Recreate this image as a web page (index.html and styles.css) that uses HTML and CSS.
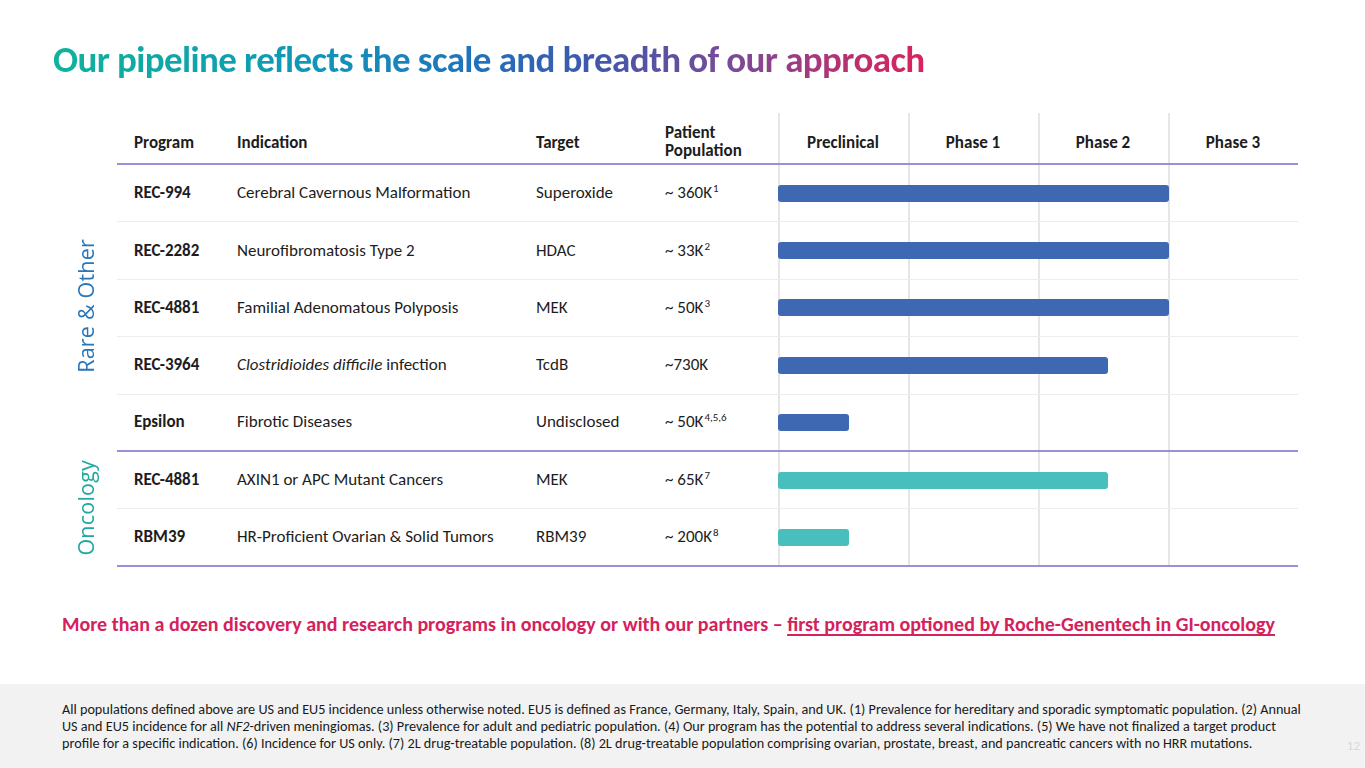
FILE: index.html
```html
<!DOCTYPE html>
<html lang="en">
<head>
<meta charset="utf-8">
<title>Pipeline</title>
<link rel="stylesheet" href="styles.css">
</head>
<body>
<div class="slide">
  <header class="top">
    <h1 class="title">Our pipeline reflects the scale and breadth of our approach</h1>
  </header>

  <section class="pipeline">
    <div class="side">
      <div class="side-head"></div>
      <div class="side-group rare"><span>Rare &amp; Other</span></div>
      <div class="side-group onco"><span>Oncology</span></div>
    </div>
    <div class="table">
      <div class="row head">
        <div class="cell"><span>Program</span></div>
        <div class="cell"><span>Indication</span></div>
        <div class="cell"><span>Target</span></div>
        <div class="cell two"><span>Patient<br>Population</span></div>
        <div class="track">
          <div class="ph">Preclinical</div>
          <div class="ph">Phase 1</div>
          <div class="ph">Phase 2</div>
          <div class="ph">Phase 3</div>
        </div>
      </div>

      <div class="row">
        <div class="cell prog"><span>REC-994</span></div>
        <div class="cell"><span>Cerebral Cavernous Malformation</span></div>
        <div class="cell"><span>Superoxide</span></div>
        <div class="cell"><span>~ 360K<sup>1</sup></span></div>
        <div class="track"><div class="bar blue" style="width:391px"></div></div>
      </div>
      <div class="row">
        <div class="cell prog"><span>REC-2282</span></div>
        <div class="cell"><span>Neurofibromatosis Type 2</span></div>
        <div class="cell"><span>HDAC</span></div>
        <div class="cell"><span>~ 33K<sup>2</sup></span></div>
        <div class="track"><div class="bar blue" style="width:391px"></div></div>
      </div>
      <div class="row">
        <div class="cell prog"><span>REC-4881</span></div>
        <div class="cell"><span>Familial Adenomatous Polyposis</span></div>
        <div class="cell"><span>MEK</span></div>
        <div class="cell"><span>~ 50K<sup>3</sup></span></div>
        <div class="track"><div class="bar blue" style="width:391px"></div></div>
      </div>
      <div class="row">
        <div class="cell prog"><span>REC-3964</span></div>
        <div class="cell"><span><em>Clostridioides difficile</em> infection</span></div>
        <div class="cell"><span>TcdB</span></div>
        <div class="cell"><span>~730K</span></div>
        <div class="track"><div class="bar blue" style="width:330px"></div></div>
      </div>
      <div class="row group-end">
        <div class="cell prog"><span>Epsilon</span></div>
        <div class="cell"><span>Fibrotic Diseases</span></div>
        <div class="cell"><span>Undisclosed</span></div>
        <div class="cell"><span>~ 50K<sup>4,5,6</sup></span></div>
        <div class="track"><div class="bar blue" style="width:71px"></div></div>
      </div>
      <div class="row">
        <div class="cell prog"><span>REC-4881</span></div>
        <div class="cell"><span>AXIN1 or APC Mutant Cancers</span></div>
        <div class="cell"><span>MEK</span></div>
        <div class="cell"><span>~ 65K<sup>7</sup></span></div>
        <div class="track"><div class="bar teal" style="width:330px"></div></div>
      </div>
      <div class="row group-end">
        <div class="cell prog"><span>RBM39</span></div>
        <div class="cell"><span>HR-Proficient Ovarian &amp; Solid Tumors</span></div>
        <div class="cell"><span>RBM39</span></div>
        <div class="cell"><span>~ 200K<sup>8</sup></span></div>
        <div class="track"><div class="bar teal" style="width:71px"></div></div>
      </div>
    </div>
  </section>

  <p class="tagline">More than a dozen discovery and research programs in oncology or with our partners – <u>first program optioned by Roche-Genentech in GI-oncology</u></p>

  <footer class="foot">
    <p class="notes">All populations defined above are US and EU5 incidence unless otherwise noted. EU5 is defined as France, Germany, Italy, Spain, and UK. (1) Prevalence for hereditary and sporadic symptomatic population. (2) Annual<br>US and EU5 incidence for all <em>NF2</em>-driven meningiomas. (3) Prevalence for adult and pediatric population. (4) Our program has the potential to address several indications. (5) We have not finalized a target product<br>profile for a specific indication. (6) Incidence for US only. (7) 2L drug-treatable population. (8) 2L drug-treatable population comprising ovarian, prostate, breast, and pancreatic cancers with no HRR mutations.</p>
    <span class="pagenum">12</span>
  </footer>
</div>
</body>
</html>
```

FILE: styles.css
```css
* { box-sizing: border-box; }
html, body { margin: 0; padding: 0; background: #fff; }
body { font-family: Carlito, Lato, "Liberation Sans", sans-serif; color: #1d1d1d; }

.slide {
  width: 1365px;
  height: 768px;
  display: flex;
  flex-direction: column;
  overflow: hidden;
}

.top { height: 113px; padding: 37px 0 0 53px; }
.title {
  margin: 0;
  font-size: 37px;
  font-weight: 700;
  letter-spacing: -0.6px;
  line-height: 46px;
  display: inline-block;
  background: linear-gradient(90deg, #0fb39b 0%, #1096b8 30%, #1f73bd 48%, #3f58aa 62%, #7b4a98 78%, #b23374 90%, #dc215c 100%);
  -webkit-background-clip: text;
  background-clip: text;
  color: transparent;
}

.pipeline { display: flex; }
.side { width: 117px; display: flex; flex-direction: column; }
.side-head { height: 52px; }
.side-group { display: flex; align-items: center; justify-content: center; padding-left: 57px; padding-right: 3px; }
.side-group span {
  writing-mode: vertical-rl;
  transform: rotate(180deg);
  font-family: "Open Sans", sans-serif;
  font-size: 21.5px;
  letter-spacing: 0.2px;
  white-space: nowrap;
}
.rare { height: 287px; color: #2a76b9; padding-bottom: 6px; }
.onco { height: 115px; color: #1fa99e; padding-bottom: 4px; }

.table { width: 1181px; }
.row {
  display: grid;
  grid-template-columns: 120px 299px 129px 113px 520px;
  height: 57.4px;
  border-bottom: 1px solid #ededed;
  font-size: 17px;
}
.row.head { height: 52px; border-bottom: 2px solid #9a90d6; font-weight: 700; }
.row.head .cell, .row.head .ph { padding-top: 9px; }
.row.head .cell.two { line-height: 18px; padding-top: 7px; }
.row.group-end { border-bottom: 2px solid #9a90d6; }
.cell { display: flex; align-items: center; line-height: 18px; white-space: nowrap; }
.cell:first-child { padding-left: 17px; }
.prog { font-weight: 700; }
.cell sup { font-size: 11px; line-height: 0; vertical-align: 6px; margin-left: 1px; }

.track {
  display: flex;
  align-items: center;
  background:
    linear-gradient(#e6e6e6, #e6e6e6) 0 0 / 2px 100% no-repeat,
    linear-gradient(#e6e6e6, #e6e6e6) 130px 0 / 2px 100% no-repeat,
    linear-gradient(#e6e6e6, #e6e6e6) 260px 0 / 2px 100% no-repeat,
    linear-gradient(#e6e6e6, #e6e6e6) 390px 0 / 2px 100% no-repeat;
}
.head .track { display: grid; grid-template-columns: repeat(4, 130px); }
.ph { display: flex; align-items: center; justify-content: center; }
.bar { height: 17px; border-radius: 3px; }
.bar.blue { background: #3e68b2; }
.bar.teal { background: #48bebd; }

.tagline {
  margin: 44px 0 0 62px;
  font-size: 20px;
  font-weight: 700;
  color: #d5215c;
  line-height: 26px;
  white-space: nowrap;
}
.tagline u { text-underline-offset: 3px; text-decoration-thickness: 1.5px; }

.foot {
  margin-top: auto;
  height: 84px;
  background: #f2f2f2;
  position: relative;
  padding: 17px 0 0 62px;
}
.notes { margin: 0; font-size: 14.2px; line-height: 17px; color: #1a1a1a; white-space: nowrap; }
.pagenum { position: absolute; right: 5px; top: 54px; font-size: 13px; color: #d8d8d8; }
```
